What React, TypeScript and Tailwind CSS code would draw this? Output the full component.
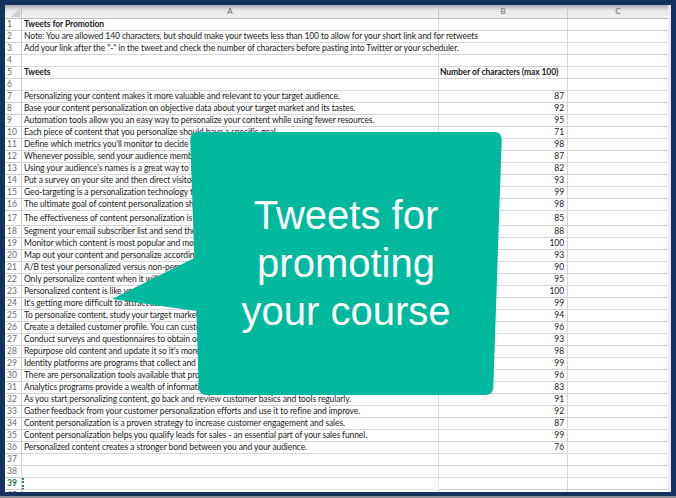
type Row = { n: number; a?: string; b?: string; bold?: boolean; tall?: boolean }

const rows: Row[] = [
  { n: 1, a: "Tweets for Promotion", bold: true },
  { n: 2, a: "Note: You are allowed 140 characters, but should make your tweets less than 100 to allow for your short link and for retweets" },
  { n: 3, a: 'Add your link after the "-" in the tweet and check the number of characters before pasting into Twitter or your scheduler.' },
  { n: 4 },
  { n: 5, a: "Tweets", b: "Number of characters (max 100)", bold: true },
  { n: 6 },
  { n: 7, a: "Personalizing your content makes it more valuable and relevant to your target audience.", b: "87" },
  { n: 8, a: "Base your content personalization on objective data about your target market and its tastes.", b: "92" },
  { n: 9, a: "Automation tools allow you an easy way to personalize your content while using fewer resources.", b: "95" },
  { n: 10, a: "Each piece of content that you personalize should have a specific goal.", b: "71" },
  { n: 11, a: "Define which metrics you'll monitor to decide whether personalization is working.", b: "98" },
  { n: 12, a: "Whenever possible, send your audience members content based on their interests.", b: "87" },
  { n: 13, a: "Using your audience's names is a great way to make your content feel personal.", b: "82" },
  { n: 14, a: "Put a survey on your site and then direct visitors to the content they want.", b: "93" },
  { n: 15, a: "Geo-targeting is a personalization technology that serves content by location.", b: "99" },
  { n: 16, a: "The ultimate goal of content personalization should be a better customer experience.", b: "98" },
  { n: 17, a: "The effectiveness of content personalization is measured by engagement.", b: "85", tall: true },
  { n: 18, a: "Segment your email subscriber list and send them content they care about.", b: "88" },
  { n: 19, a: "Monitor which content is most popular and more of what works for your audience.", b: "100" },
  { n: 20, a: "Map out your content and personalize according to the buyer's journey stage.", b: "93" },
  { n: 21, a: "A/B test your personalized versus non-personalized content to see what works.", b: "90" },
  { n: 22, a: "Only personalize content when it will add real value for your audience.", b: "95" },
  { n: 23, a: "Personalized content is like your best salesperson, working around the clock.", b: "100" },
  { n: 24, a: "It's getting more difficult to attract attention without personalized content.", b: "99" },
  { n: 25, a: "To personalize content, study your target market and what they respond to.", b: "94" },
  { n: 26, a: "Create a detailed customer profile. You can customize content for each one.", b: "96" },
  { n: 27, a: "Conduct surveys and questionnaires to obtain our customers' preferences.", b: "93" },
  { n: 28, a: "Repurpose old content and update it so it's more relevant to your audience.", b: "98" },
  { n: 29, a: "Identity platforms are programs that collect and organize customer data.", b: "99" },
  { n: 30, a: "There are personalization tools available that provide dynamic content.", b: "96" },
  { n: 31, a: "Analytics programs provide a wealth of information about your audience.", b: "83" },
  { n: 32, a: "As you start personalizing content, go back and review customer basics and tools regularly.", b: "91" },
  { n: 33, a: "Gather feedback from your customer personalization efforts and use it to refine and improve.", b: "92" },
  { n: 34, a: "Content personalization is a proven strategy to increase customer engagement and sales.", b: "87" },
  { n: 35, a: "Content personalization helps you qualify leads for sales - an essential part of your sales funnel.", b: "99" },
  { n: 36, a: "Personalized content creates a stronger bond between you and your audience.", b: "76" },
  { n: 37 },
  { n: 38 },
  { n: 39 },
  { n: 40 },
]

const cellFont = "font-['Lato','Liberation_Sans',sans-serif] text-[8.5px] tracking-[-0.1px] leading-[11px] text-[#1a1a1a]"

function SheetRow({ row }: { row: Row }) {
  const active = row.n === 39
  const overflowA = !row.b
  return (
    <div className={`grid grid-cols-[17px_417px_129px_1fr] ${row.tall ? "h-[15px]" : "h-[12px]"}`}>
      <div
        className={`flex items-center border-r border-b border-[#cfcfcf] pl-[2px] font-['Lato','Liberation_Sans',sans-serif] text-[8.5px] leading-[11px] ${
          active ? "font-bold text-[#1f7a48]" : "text-[#6b6b6b]"
        }`}
      >
        {row.n}
      </div>
      <div
        className={`flex items-center border-r border-b border-[#d6d6d6] pl-[2px] whitespace-nowrap ${cellFont} ${
          overflowA ? "overflow-visible" : "overflow-hidden"
        } ${row.bold ? "font-bold" : ""} ${active ? "border-l-2 border-dotted border-l-[#2e8b57]" : ""}`}
      >
        {row.a}
      </div>
      <div
        className={`flex items-center border-r border-b border-[#d6d6d6] whitespace-nowrap ${cellFont} ${
          row.bold ? "justify-start pl-[1px] font-bold" : "justify-end pr-[3px]"
        }`}
      >
        {row.b}
      </div>
      <div className="border-b border-[#d6d6d6]" />
    </div>
  )
}

function Bubble() {
  return (
    <div className="pointer-events-none absolute left-0 top-0 z-20 h-[498px] w-[676px]">
      <svg className="absolute left-0 top-0" width={676} height={498} viewBox="0 0 676 498">
        <path
          d="M198 132 L494 132 Q502 132 501.7 140 L493.3 387 Q493 395 485 395 L207 395 Q199 395 198.7 387 L196.4 311 L112 299 L194.3 258 L190.3 140 Q190 132 198 132 Z"
          fill="#00b89e"
        />
      </svg>
      <div className="absolute left-[196px] top-[191px] w-[300px] text-center font-['Liberation_Sans',Arial,sans-serif] text-[40px] leading-[48px] text-white">
        Tweets for
        <br />
        promoting
        <br />
        your course
      </div>
    </div>
  )
}

export default function App() {
  return (
    <div className="relative h-[498px] w-[676px] overflow-hidden bg-[#8b8e94]">
      <div className="h-[496px] bg-[#13325f] pb-[4px] pl-[5px] pr-[5px] pt-[5px]">
        <div className="h-full overflow-hidden border-r-[3px] border-[#ecebf4] bg-white">
          <div className="grid h-[14px] grid-cols-[17px_417px_129px_1fr] border-b border-[#bdbdbd] bg-linear-to-b from-[#a9a9a9] via-[#e6e6e6] via-40% to-[#f3f3f3] font-['Lato','Liberation_Sans',sans-serif] text-[8px] leading-[13px] text-[#6a6a6a]">
            <div className="relative border-r border-[#c4c4c4]">
              <svg className="absolute bottom-[1px] right-[1px]" width={9} height={9} viewBox="0 0 9 9">
                <path d="M9 0 L9 9 L0 9 Z" fill="#cfcfcf" />
              </svg>
            </div>
            <div className="border-r border-[#c4c4c4] text-center">A</div>
            <div className="border-r border-[#c4c4c4] text-center">B</div>
            <div className="text-center">C</div>
          </div>
          {rows.map((row) => (
            <SheetRow key={row.n} row={row} />
          ))}
        </div>
      </div>
      <Bubble />
    </div>
  )
}
